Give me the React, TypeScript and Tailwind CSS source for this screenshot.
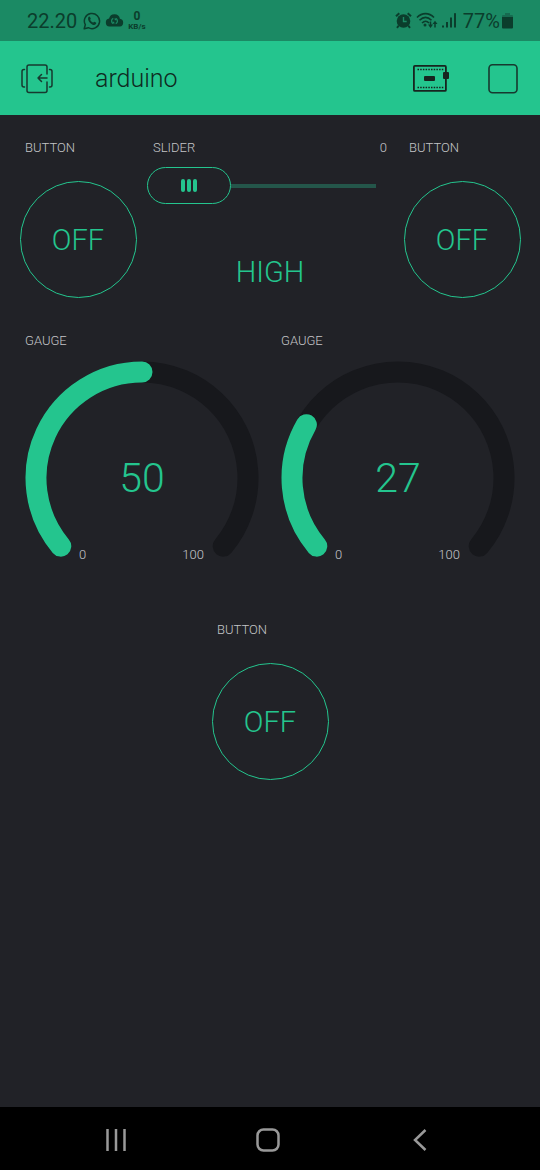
import { useState } from 'react';

function WhatsAppIcon() {
  return (
    <svg className="size-[18px]" viewBox="0 0 18 18" fill="none" aria-hidden="true">
      <path d="M1.2 16.8l1.1-4.1A7.6 7.6 0 1 1 5.3 15.700z" stroke="currentColor" strokeWidth="1.5" strokeLinejoin="round" />
      <path d="M5.300 5.200c.6-1 1.400-1 1.800 0l.6 1.400c.2.5-.7 1.100-.5 1.500.6 1.200 1.500 2 2.700 2.500.5.2 1-1 1.500-.8l1.500.8c.7.3.2 1.500-.5 2-1.300.9-3.600-.1-5.200-1.700S4.500 7 5.300 5.200z" fill="currentColor" />
    </svg>
  );
}

function CloudIcon() {
  return (
    <svg className="h-[13px] w-[19px]" viewBox="0 0 19 13" aria-hidden="true">
      <path d="M4.300 12.500A4 4 0 0 1 4.100 4.600 5.500 5.500 0 0 1 14.900 4.800 3.900 3.900 0 0 1 14.900 12.500z" fill="currentColor" />
      <path d="M8.300 4.400A2.800 2.800 0 0 0 8.300 9.600M10.700 4.400A2.800 2.800 0 0 1 10.700 9.600" fill="none" stroke="#1b8a64" strokeWidth="1.200" />
      <path d="M7 7.800h2.300v2.500zM12 6.200H9.700V3.700z" fill="#1b8a64" />
    </svg>
  );
}

function AlarmIcon() {
  return (
    <svg className="size-[17px]" viewBox="0 0 17 17" fill="none" stroke="currentColor" aria-hidden="true">
      <circle cx="8.500" cy="9" r="6.800" fill="currentColor" stroke="none" />
      <path d="M1 4.300L4.300 1.300M16 4.300L12.700 1.300M3.800 13.500L2 15.800M13.200 13.500L15 15.800" strokeWidth="2" />
      <path d="M8.500 5v4.500h3.200" stroke="#1b8a64" strokeWidth="1.400" />
    </svg>
  );
}

function WifiIcon() {
  return (
    <svg className="h-[17px] w-[22px]" viewBox="0 0 22 17" fill="none" stroke="currentColor" aria-hidden="true">
      <path d="M1 5.500C6 .3 13 .3 18 5.500M3.500 8.300c4-4 8-4 12 0M6 11c2.500-2.400 4.800-2.400 7 0" strokeWidth="1.600" />
      <circle cx="9" cy="13" r="1.500" fill="currentColor" stroke="none" />
      <path d="M14.500 9.500v5M19 11v4.500" strokeWidth="1.500" />
      <path d="M12 12.500h5L14.500 16zM16.500 12h5L19 8.800z" fill="currentColor" stroke="none" />
    </svg>
  );
}

function SignalIcon() {
  return (
    <svg className="h-[17px] w-[15px]" viewBox="0 0 15 17" fill="currentColor" aria-hidden="true">
      <rect x="0" y="13.500" width="2" height="2" />
      <rect x="4" y="10" width="2" height="5.500" />
      <rect x="8" y="5.500" width="2" height="10" />
      <rect x="12" y="1.200" width="2" height="14.300" />
    </svg>
  );
}

function BatteryIcon() {
  return (
    <svg className="h-[17px] w-[11px]" viewBox="0 0 11 17" aria-hidden="true">
      <path d="M3 1h5v2h2a1 1 0 0 1 1 1v2H0V4a1 1 0 0 1 1-1h2z" fill="#176b50" />
      <path d="M0 5h11v10.500a1 1 0 0 1-1 1H1a1 1 0 0 1-1-1z" fill="currentColor" />
    </svg>
  );
}

function StatusBar() {
  return (
    <div className="flex h-[41px] items-center justify-between bg-[#1b8a64] px-[27px] text-[#0b3d2c]">
      <div className="flex items-center">
        <span className="text-[20px] leading-6">22.20</span>
        <div className="ml-1.5 flex items-center gap-1">
          <WhatsAppIcon />
          <CloudIcon />
          <div className="flex flex-col items-center font-bold">
            <span className="text-[12px] leading-3">0</span>
            <span className="text-[8px] leading-[10px]">KB/s</span>
          </div>
        </div>
      </div>
      <div className="flex items-center gap-1">
        <AlarmIcon />
        <WifiIcon />
        <SignalIcon />
        <div className="ml-0.5 flex items-center gap-0.5">
          <span className="text-[20px] leading-6">77%</span>
          <BatteryIcon />
        </div>
      </div>
    </div>
  );
}

function AppBar() {
  return (
    <header className="flex h-[74px] items-center bg-[#24c58e] pt-0.5 pr-[22px] pl-[21px] text-[#17392f]">
      <button type="button" aria-label="Exit project">
        <svg className="h-[30px] w-8" viewBox="0 0 32 30" fill="none" stroke="currentColor" strokeWidth="1.500" strokeLinecap="round" strokeLinejoin="round">
          <path d="M26 10V3a2 2 0 0 0-2-2H8a2 2 0 0 0-2 2v23.500a2 2 0 0 0 2 2h16a2 2 0 0 0 2-2V18" />
          <path d="M3.500 5.500H3a2 2 0 0 0-2 2v13.500a2 2 0 0 0 2 2h.5M28.500 5.500h.5a2 2 0 0 1 2 2v13.500a2 2 0 0 1-2 2h-.5" />
          <path d="M26 14h-9M20.500 10.500L17 14l3.500 3.500" />
        </svg>
      </button>
      <h1 className="ml-[42px] text-[25px] leading-8 font-light text-[#0f2a21]">arduino</h1>
      <button type="button" aria-label="Device status" className="ml-auto">
        <svg className="h-[30px] w-9" viewBox="0 0 36 30" fill="none" stroke="#17241f">
          <rect x=".9" y="1.900" width="32" height="25" rx="1" strokeWidth="1.800" />
          <path d="M4.500 5.500h26M4.500 23.500h26" strokeWidth="1.500" strokeDasharray="1.500 1.200" />
          <rect x="11" y="12" width="11" height="5" rx="1" fill="#17241f" stroke="none" />
          <rect x="30" y="8" width="6" height="7" rx="1" fill="#17241f" stroke="none" />
        </svg>
      </button>
      <button type="button" aria-label="Stop project" className="ml-[39px]">
        <svg className="size-[30px]" viewBox="0 0 30 30" fill="none" stroke="currentColor" strokeWidth="1.600">
          <rect x="1" y=".8" width="28" height="28" rx="3.500" />
        </svg>
      </button>
    </header>
  );
}

function WidgetLabel({ children }: { children: string }) {
  return <div className="px-[11px] text-[13px] leading-4 text-[#c4c5c7]">{children}</div>;
}

function ButtonWidget() {
  const [on, setOn] = useState(false);
  return (
    <div className="pt-2">
      <WidgetLabel>BUTTON</WidgetLabel>
      <button
        type="button"
        aria-pressed={on}
        onClick={() => setOn(!on)}
        className="mx-auto mt-[25px] flex size-[117px] items-center justify-center rounded-full border border-[#24c58e] text-[29px] leading-10 text-[#24c58e]"
      >
        {on ? 'ON' : 'OFF'}
      </button>
    </div>
  );
}

function SliderWidget() {
  const [value, setValue] = useState(0);
  return (
    <div className="pt-2">
      <div className="flex justify-between px-[11px] text-[13px] leading-4 text-[#c4c5c7]">
        <label htmlFor="slider">SLIDER</label>
        <output htmlFor="slider">{value}</output>
      </div>
      <div className="relative mt-[11px] mr-[22px] ml-[5px] flex h-[37px] items-center">
        <div
          className="flex h-[37px] w-[84px] shrink-0 items-center justify-center gap-0.5 rounded-full border border-[#24c58e]"
          style={{ marginLeft: `calc((100% - 84px) * ${value / 100})` }}
        >
          <span className="h-[13px] w-1 rounded-sm bg-[#24c58e]" />
          <span className="h-[13px] w-1 rounded-sm bg-[#24c58e]" />
          <span className="h-[13px] w-1 rounded-sm bg-[#24c58e]" />
        </div>
        <div className="h-1 grow bg-[#24564a]" />
        <input
          id="slider"
          type="range"
          min={0}
          max={100}
          value={value}
          onChange={(e) => setValue(Number(e.target.value))}
          className="absolute inset-0 size-full cursor-pointer opacity-0"
        />
      </div>
      <div className="mt-12 text-center text-[29px] leading-10 text-[#24c58e]">HIGH</div>
    </div>
  );
}

const SWEEP = 260;
const RADIUS = 106;

function gaugeArc(percent: number) {
  const point = (deg: number) => {
    const rad = (deg * Math.PI) / 180;
    return `${128 + RADIUS * Math.cos(rad)} ${129 + RADIUS * Math.sin(rad)}`;
  };
  const sweep = (SWEEP * percent) / 100;
  return `M${point(140)}A${RADIUS} ${RADIUS} 0 ${sweep > 180 ? 1 : 0} 1 ${point(140 + sweep)}`;
}

function GaugeWidget({ value }: { value: number }) {
  return (
    <div className="pt-2">
      <WidgetLabel>GAUGE</WidgetLabel>
      <svg className="w-full" viewBox="0 0 256 226" role="img" aria-label={`Gauge ${value} of 100`}>
        <g fill="none" strokeWidth="21" strokeLinecap="round">
          <path d={gaugeArc(100)} stroke="#17181c" />
          <path d={gaugeArc(value)} stroke="#24c58e" />
        </g>
        <text x="128" y="143" textAnchor="middle" fontSize="41" fill="#24c58e">{value}</text>
        <g fontSize="13" fill="#c4c5c7">
          <text x="65" y="210">0</text>
          <text x="190" y="210" textAnchor="end">100</text>
        </g>
      </svg>
    </div>
  );
}

function NavBar() {
  return (
    <nav className="grid h-[63px] grid-cols-3 items-center bg-black pt-0.5 pr-11 pl-10 text-[#999]">
      <button type="button" aria-label="Recent apps" className="flex justify-center">
        <svg className="size-6" viewBox="0 0 24 24" stroke="currentColor" strokeWidth="2.500">
          <path d="M3.500 1v22M12 1v22M20.500 1v22" />
        </svg>
      </button>
      <button type="button" aria-label="Home" className="flex justify-center">
        <svg className="size-6" viewBox="0 0 24 24" fill="none" stroke="currentColor" strokeWidth="2.500">
          <rect x="1.500" y="1.500" width="21" height="21" rx="6" />
        </svg>
      </button>
      <button type="button" aria-label="Back" className="flex justify-center">
        <svg className="size-6" viewBox="0 0 24 24" fill="none" stroke="currentColor" strokeWidth="2.500">
          <path d="M17.500 2L7 12l10.500 10" />
        </svg>
      </button>
    </nav>
  );
}

export default function App() {
  return (
    <div className="flex min-h-screen flex-col bg-[#212227] font-['Roboto',sans-serif] font-normal">
      <StatusBar />
      <AppBar />
      <main className="grid grow auto-rows-min grid-cols-8 px-3.5 pt-[17px] font-light">
        <div className="col-span-2 min-h-[193px]"><ButtonWidget /></div>
        <div className="col-span-4"><SliderWidget /></div>
        <div className="col-span-2"><ButtonWidget /></div>
        <div className="col-span-4 min-h-[289px]"><GaugeWidget value={50} /></div>
        <div className="col-span-4"><GaugeWidget value={27} /></div>
        <div className="col-span-2 col-start-4"><ButtonWidget /></div>
      </main>
      <NavBar />
    </div>
  );
}
